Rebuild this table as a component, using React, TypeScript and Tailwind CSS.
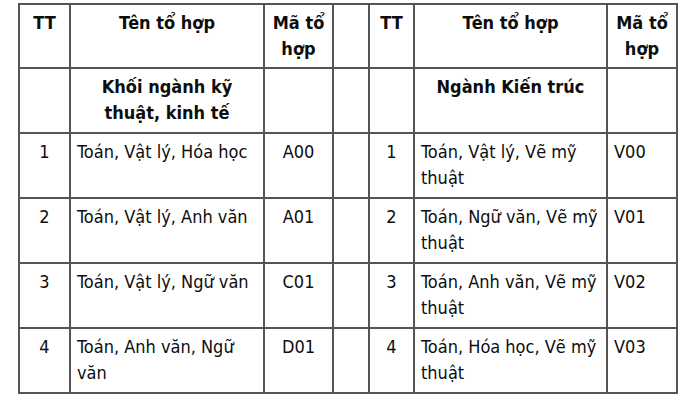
import React from "react";

type Row = { tt: string; name: React.ReactNode; code: string };

const left: Row[] = [
  { tt: "1", name: "Toán, Vật lý, Hóa học", code: "A00" },
  { tt: "2", name: "Toán, Vật lý, Anh văn", code: "A01" },
  { tt: "3", name: "Toán, Vật lý, Ngữ văn", code: "C01" },
  { tt: "4", name: <>Toán, Anh văn, Ngữ<br />văn</>, code: "D01" },
];

const right: Row[] = [
  { tt: "1", name: <>Toán, Vật lý, Vẽ mỹ<br />thuật</>, code: "V00" },
  { tt: "2", name: <>Toán, Ngữ văn, Vẽ mỹ<br />thuật</>, code: "V01" },
  { tt: "3", name: <>Toán, Anh văn, Vẽ mỹ<br />thuật</>, code: "V02" },
  { tt: "4", name: <>Toán, Hóa học, Vẽ mỹ<br />thuật</>, code: "V03" },
];

const cell = "border-2 border-[#555] align-top pt-[5px] px-[6px]";

export default function App(): JSX.Element {
  return (
    <div
      className="min-h-[407px] bg-white pl-[18px] pt-[3px] text-[18px] leading-[26px] text-[#0d0d0d]"
      style={{ fontFamily: '"DejaVu Sans Condensed", "DejaVu Sans", sans-serif' }}
    >
      <table className="table-fixed border-collapse w-[658px]">
        <colgroup>
          <col className="w-[51px]" />
          <col className="w-[194px]" />
          <col className="w-[69px]" />
          <col className="w-[36px]" />
          <col className="w-[45px]" />
          <col className="w-[193px]" />
          <col className="w-[70px]" />
        </colgroup>
        <tbody>
          <tr className="h-[64px] font-bold text-center">
            <td className={cell}>TT</td>
            <td className={cell}>Tên tổ hợp</td>
            <td className={cell}>Mã tổ<br />hợp</td>
            <td className={cell}></td>
            <td className={cell}>TT</td>
            <td className={cell}>Tên tổ hợp</td>
            <td className={cell}>Mã tổ<br />hợp</td>
          </tr>
          <tr className="h-[65px] font-bold text-center">
            <td className={cell}></td>
            <td className={cell}>Khối ngành kỹ<br />thuật, kinh tế</td>
            <td className={cell}></td>
            <td className={cell}></td>
            <td className={cell}></td>
            <td className={cell}>Ngành Kiến trúc</td>
            <td className={cell}></td>
          </tr>
          {left.map((row, index) => {
            const r = right[index];
            return (
              <tr key={index} className="h-[65px]">
                <td className={cell + " text-center"}>{row.tt}</td>
                <td className={cell}>{row.name}</td>
                <td className={cell + " text-center"}>{row.code}</td>
                <td className={cell}></td>
                <td className={cell + " text-center"}>{r.tt}</td>
                <td className={cell}>{r.name}</td>
                <td className={cell}>{r.code}</td>
              </tr>
            );
          })}
        </tbody>
      </table>
    </div>
  );
}
